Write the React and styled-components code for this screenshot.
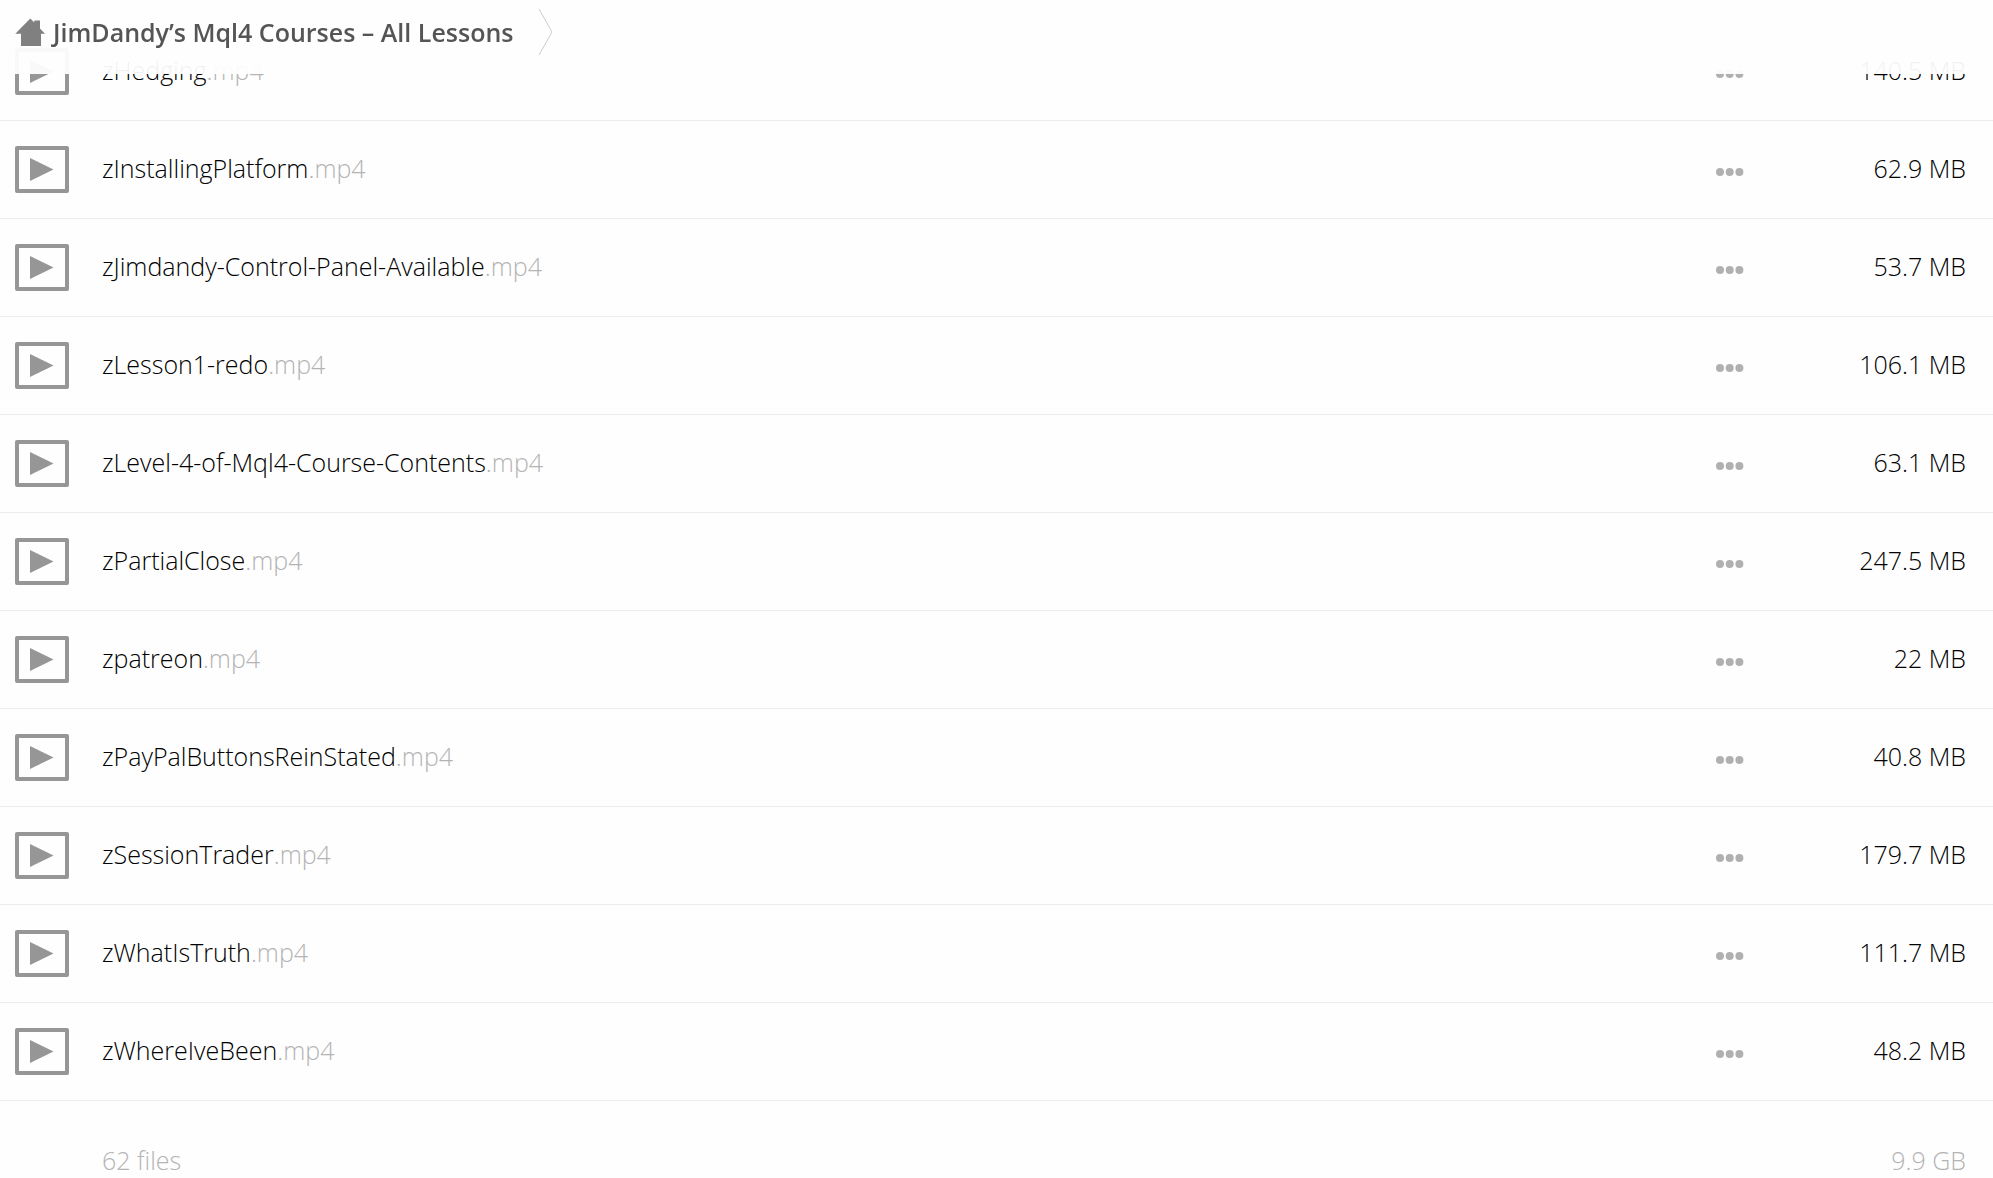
import React from "react";
import styled, { createGlobalStyle } from "styled-components";

const GlobalStyle = createGlobalStyle`
  body {
    margin: 0;
    background: #fefefe;
    color: #000;
    font-family: "Open Sans", "Noto Sans", sans-serif;
    font-size: 25px;
    font-weight: 300;
    line-height: 34px;
  }
`;

const Header = styled.header`
  position: fixed;
  top: 0;
  left: 0;
  right: 0;
  z-index: 1;
  display: flex;
  align-items: center;
  box-sizing: border-box;
  height: 74px;
  padding: 0 15px 10px;
  background: rgba(254, 254, 254, 0.95);
`;

const Crumb = styled.a`
  display: flex;
  align-items: center;
  gap: 8px;
  color: #555;
  font-weight: 600;
  text-decoration: none;
`;

const Separator = styled.svg`
  margin-left: 25px;
`;

const Main = styled.main`
  padding-top: 23px;
`;

const Table = styled.table`
  width: 100%;
  border-spacing: 0;
  table-layout: fixed;
`;

const MoreCol = styled.col`
  width: 131px;
`;

const SizeCol = styled.col`
  width: 200px;
`;

const Row = styled.tr`
  td {
    height: 97px;
    border-bottom: 1px solid #ececec;
  }
`;

const Cell = styled.td`
  box-sizing: content-box;
  padding: 0;
`;

const SizeCell = styled(Cell)`
  padding-right: 27px;
  text-align: right;
`;

const Label = styled.span`
  display: block;
  padding-bottom: 3px;
`;

const FileLink = styled.a`
  display: flex;
  align-items: center;
  gap: 33px;
  padding-left: 15px;
  color: inherit;
  text-decoration: none;
`;

const Ext = styled.span`
  color: #b4b4b4;
`;

const MoreButton = styled.button`
  display: flex;
  padding: 12px;
  margin: 4px 0 0 42px;
  border: 0;
  background: none;
  cursor: pointer;
`;

const SummaryRow = styled.tr`
  color: #b4b4b4;

  td {
    height: 76px;
    vertical-align: bottom;
  }
`;

const SummaryCell = styled(Cell)`
  padding-left: 102px;
`;

const files = [
  { name: "zHedging", size: "140.5 MB" },
  { name: "zInstallingPlatform", size: "62.9 MB" },
  { name: "zJimdandy-Control-Panel-Available", size: "53.7 MB" },
  { name: "zLesson1-redo", size: "106.1 MB" },
  { name: "zLevel-4-of-Mql4-Course-Contents", size: "63.1 MB" },
  { name: "zPartialClose", size: "247.5 MB" },
  { name: "zpatreon", size: "22 MB" },
  { name: "zPayPalButtonsReinStated", size: "40.8 MB" },
  { name: "zSessionTrader", size: "179.7 MB" },
  { name: "zWhatIsTruth", size: "111.7 MB" },
  { name: "zWhereIveBeen", size: "48.2 MB" },
];

const HomeIcon = () => (
  <svg width="30" height="28" viewBox="0 0 30 28" fill="#808080" aria-hidden="true">
    <path d="M15.300 0.500L19.300 4.500V2.500H25V10.500L30 15.800H26V28H6V15.800H0.300Z" />
  </svg>
);

const VideoIcon = () => (
  <svg width="54" height="47" viewBox="0 0 54 47" aria-hidden="true">
    <rect x="2" y="2" width="50" height="43" fill="none" stroke="#969696" strokeWidth="4" strokeLinejoin="round" />
    <path d="M15 12L38.500 23.500L15 35Z" fill="#969696" />
  </svg>
);

const DotsIcon = () => (
  <svg width="28" height="8" viewBox="0 0 28 8" fill="#b0b0b0" aria-hidden="true">
    <circle cx="4" cy="4" r="4" />
    <circle cx="13.700" cy="4" r="4" />
    <circle cx="23.400" cy="4" r="4" />
  </svg>
);

const App = () => {
  return (
    <>
      <GlobalStyle />
      <Header>
        <Crumb href="#">
          <HomeIcon />
          JimDandy’s Mql4 Courses – All Lessons
        </Crumb>
        <Separator width="15" height="48" viewBox="0 0 15 48" fill="none" stroke="#ccc" aria-hidden="true">
          <path d="M1 1L14 24L1 47" />
        </Separator>
      </Header>
      <Main>
        <Table>
          <colgroup>
            <col />
            <MoreCol />
            <SizeCol />
          </colgroup>
          <tbody>
            {files.map((file) => (
              <Row key={file.name}>
                <Cell>
                  <FileLink href={`#${file.name}`}>
                    <VideoIcon />
                    <Label>
                      {file.name}
                      <Ext>.mp4</Ext>
                    </Label>
                  </FileLink>
                </Cell>
                <Cell>
                  <MoreButton type="button" aria-label={`More actions for ${file.name}`}>
                    <DotsIcon />
                  </MoreButton>
                </Cell>
                <SizeCell>
                  <Label>{file.size}</Label>
                </SizeCell>
              </Row>
            ))}
          </tbody>
          <tfoot>
            <SummaryRow>
              <SummaryCell>62 files</SummaryCell>
              <Cell />
              <SizeCell>9.9 GB</SizeCell>
            </SummaryRow>
          </tfoot>
        </Table>
      </Main>
    </>
  );
};

export default App;
